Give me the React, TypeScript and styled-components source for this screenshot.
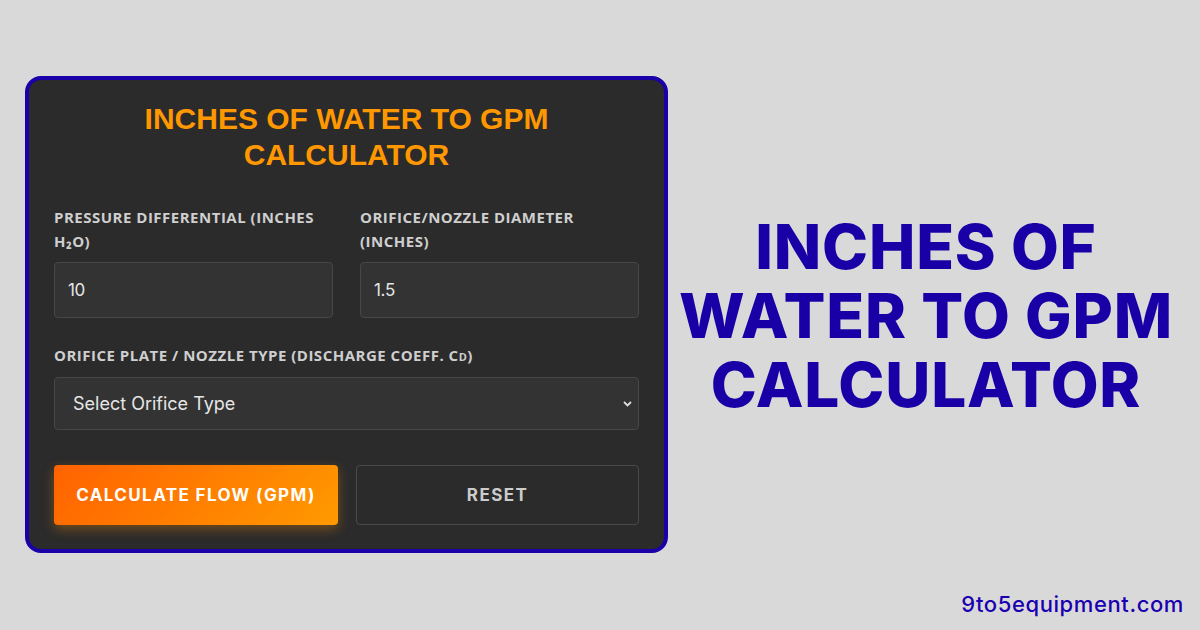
import React from "react";
import styled, { createGlobalStyle } from "styled-components";

const Global = createGlobalStyle`
  html, body { margin: 0; padding: 0; }
  body { background: #d9d9d9; width: 1200px; height: 630px; overflow: hidden; }
  * { box-sizing: border-box; }
`;

const Page = styled.div`
  width: 1200px;
  height: 630px;
  display: flex;
  flex-direction: column;
  padding: 76px 16px 13px 25px;
`;

const Row = styled.div`
  display: flex;
  align-items: center;
`;

const Card = styled.div`
  width: 643px;
  height: 477px;
  background: #2b2b2b;
  border: 4px solid #1a00a8;
  border-radius: 16px;
  padding: 21px 25px 0 25px;
  display: flex;
  flex-direction: column;
`;

const Title = styled.h1`
  margin: 0;
  text-align: center;
  color: #ff9800;
  font-family: "Liberation Sans", Arial, sans-serif;
  font-weight: 700;
  font-size: 30px;
  line-height: 36px;
  padding: 0 60px;
`;

const Fields = styled.div`
  display: grid;
  grid-template-columns: 1fr 1fr;
  column-gap: 27px;
  margin-top: 32px;
`;

const Field = styled.div`
  display: flex;
  flex-direction: column;
`;

const Label = styled.label`
  font-family: "Open Sans", sans-serif;
  font-weight: 700;
  font-size: 15px;
  line-height: 24px;
  letter-spacing: 0.5px;
  color: #cfcfcf;
  text-transform: uppercase;
  margin-bottom: 9px;
  min-height: 48px;
`;

const SingleLabel = styled(Label)`
  min-height: 0;
  margin-bottom: 8px;
`;

const SmallCap = styled.span`
  font-size: 11px;
`;

const Input = styled.input`
  height: 56px;
  width: 100%;
  background: #333333;
  border: 1px solid #474747;
  border-radius: 4px;
  color: #e6e6e6;
  font-family: "Inter", sans-serif;
  font-size: 17px;
  letter-spacing: -0.3px;
  padding: 0 13px;
  outline: none;
`;

const SelectWrap = styled.div`
  margin-top: 25px;
  display: flex;
  flex-direction: column;
`;

const Select = styled.select`
  height: 53px;
  width: 100%;
  background: #333333;
  border: 1px solid #474747;
  border-radius: 4px;
  color: #e6e6e6;
  font-family: "Inter", sans-serif;
  font-size: 18px;
  letter-spacing: 0px;
  padding: 0 18px;
  outline: none;
  appearance: none;
  background-image: url("data:image/svg+xml;utf8,<svg xmlns='http://www.w3.org/2000/svg' width='9' height='6' viewBox='0 0 9 6'><path d='M1 1l3.5 3.5L8 1' fill='none' stroke='%23dddddd' stroke-width='1.8'/></svg>");
  background-repeat: no-repeat;
  background-position: right 6px center;
`;

const Buttons = styled.div`
  display: grid;
  grid-template-columns: 284px 1fr;
  column-gap: 18px;
  margin-top: 35px;
`;

const Button = styled.button<{ $primary?: boolean }>`
  height: 60px;
  border-radius: 4px;
  font-family: "Inter", sans-serif;
  font-weight: 700;
  font-size: 17px;
  letter-spacing: 1.4px;
  cursor: pointer;
  ${(p) =>
    p.$primary
      ? `
    background: linear-gradient(135deg, #ff6200 0%, #ff9a00 100%);
    border: none;
    color: #ffffff;
    box-shadow: 0 4px 12px rgba(255, 140, 0, 0.35);
  `
      : `
    background: #2b2b2b;
    border: 1px solid #4a4a4a;
    color: #cccccc;
  `}
`;

const Side = styled.div`
  flex: 1;
  display: flex;
  justify-content: center;
  padding-top: 1px;
`;

const Headline = styled.h2`
  margin: 0;
  text-align: center;
  color: #1800a6;
  font-family: "Inter", sans-serif;
  font-weight: 800;
  font-size: 62px;
  line-height: 69px;
  letter-spacing: 0.8px;
`;

const Footer = styled.div`
  margin-top: auto;
  align-self: flex-end;
  color: #1a00b0;
  font-family: "Inter", sans-serif;
  font-weight: 500;
  font-size: 22px;
  letter-spacing: 0.6px;
`;

export default function App() {
  return (
    <>
      <Global />
      <Page>
        <Row>
          <Card>
            <Title>INCHES OF WATER TO GPM CALCULATOR</Title>
            <Fields>
              <Field>
                <Label>Pressure Differential (Inches H₂O)</Label>
                <Input defaultValue="10" />
              </Field>
              <Field>
                <Label>Orifice/Nozzle Diameter (Inches)</Label>
                <Input defaultValue="1.5" />
              </Field>
            </Fields>
            <SelectWrap>
              <SingleLabel>
                Orifice Plate / Nozzle Type (Discharge Coeff. C<SmallCap>D</SmallCap>)
              </SingleLabel>
              <Select defaultValue="">
                <option value="">Select Orifice Type</option>
              </Select>
            </SelectWrap>
            <Buttons>
              <Button $primary>CALCULATE FLOW (GPM)</Button>
              <Button>RESET</Button>
            </Buttons>
          </Card>
          <Side>
            <Headline>
              INCHES OF
              <br />
              WATER TO GPM
              <br />
              CALCULATOR
            </Headline>
          </Side>
        </Row>
        <Footer>9to5equipment.com</Footer>
      </Page>
    </>
  );
}
